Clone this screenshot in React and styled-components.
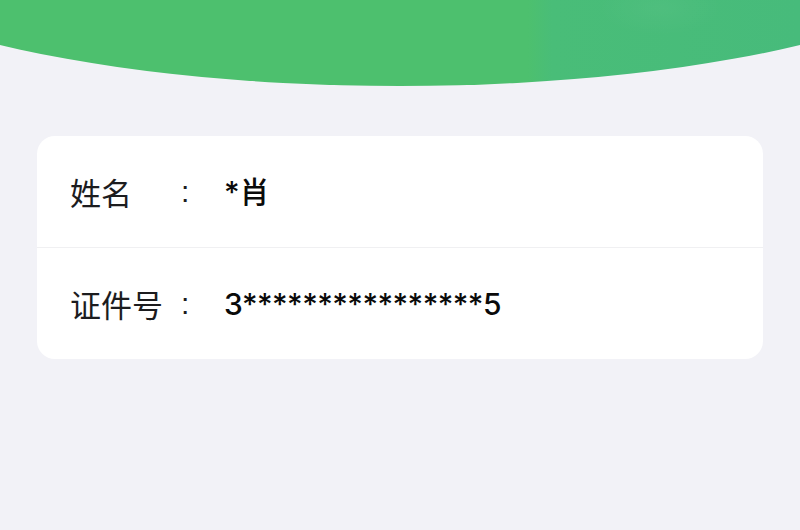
import React from 'react';
import styled, { createGlobalStyle } from 'styled-components';

const GlobalStyle = createGlobalStyle`
  html, body {
    margin: 0;
    padding: 0;
    background: #f2f2f7;
  }
  body {
    font-family: "Noto Sans CJK SC", "Noto Sans", sans-serif;
  }
`;

const Page = styled.div`
  width: 800px;
  height: 530px;
  background: #f2f2f7;
  overflow: hidden;
`;

const Banner = styled.div`
  height: 86px;
  background:
    radial-gradient(ellipse 90px 40px at 660px 8px, rgba(255,255,255,0.035), rgba(255,255,255,0) 70%),
    linear-gradient(90deg, #4dc06e 0%, #4dc06e 66%, #49bd78 69%, #47bb7b 100%);
  clip-path: ellipse(600px 161px at 400px -75px);
`;

const Card = styled.div`
  margin: 50px 37px 0;
  background: #ffffff;
  border-radius: 18px;
  overflow: hidden;
`;

const Row = styled.div`
  display: grid;
  grid-template-columns: 111px 43px 1fr;
  align-items: center;
  padding-left: 33px;
  border-top: ${p => (p.first ? 'none' : '1px solid #f0f0f2')};
  box-sizing: border-box;
  height: ${p => (p.first ? '111px' : '112px')};
`;

const Label = styled.span`
  font-family: "Noto Sans CJK SC", sans-serif;
  font-size: 31px;
  color: #1c1c1e;
  line-height: 1;
`;

const Colon = styled.span`
  font-family: "Liberation Sans", sans-serif;
  font-size: 30px;
  color: #1c1c1e;
  line-height: 1;
`;

const Value = styled.span`
  font-family: Inter, "Noto Sans CJK SC", sans-serif;
  font-size: 30px;
  font-weight: 500;
  color: #0a0a0a;
  line-height: 1;
  letter-spacing: ${p => p.spacing || '0px'};
`;

export default function App() {
  return (
    <Page>
      <GlobalStyle />
      <Banner />
      <Card>
        <Row first>
          <Label>姓名</Label>
          <Colon>:</Colon>
          <Value>*肖</Value>
        </Row>
        <Row>
          <Label>证件号</Label>
          <Colon>:</Colon>
          <Value spacing="-0.55px">3****************5</Value>
        </Row>
      </Card>
    </Page>
  );
}
